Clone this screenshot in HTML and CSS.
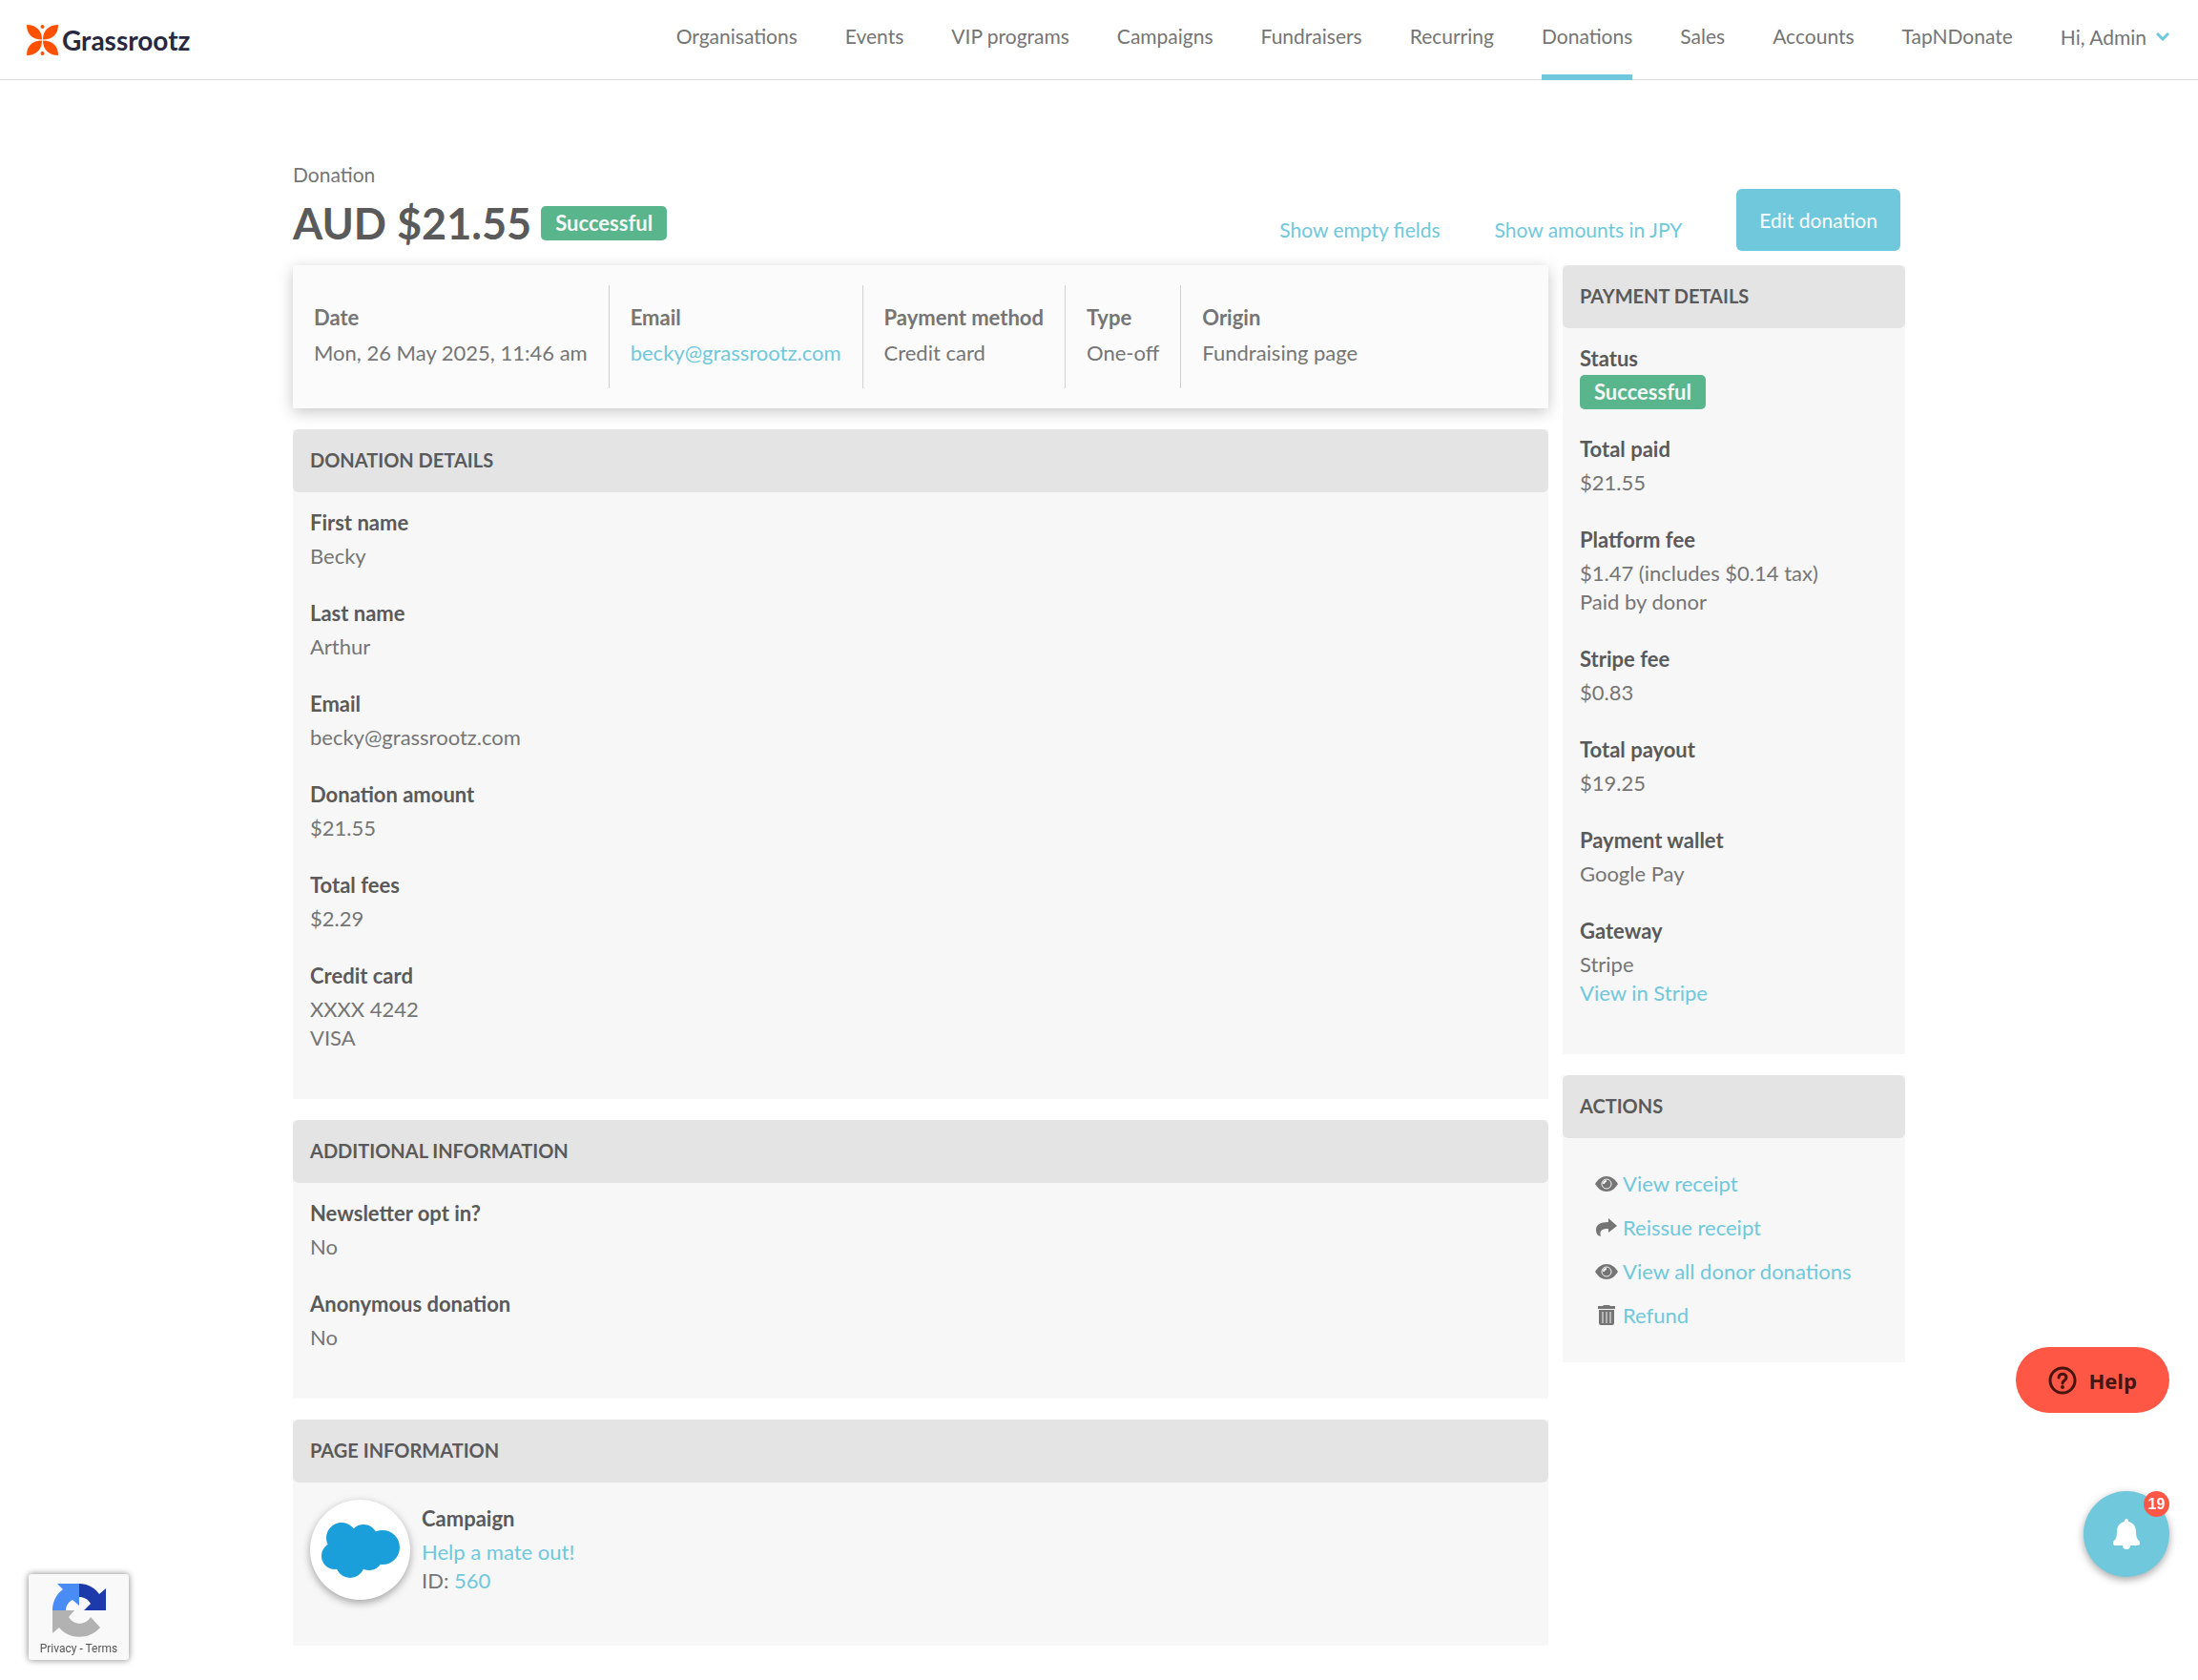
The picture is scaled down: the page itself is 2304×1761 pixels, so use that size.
FILE: index.html
```html
<!DOCTYPE html>
<html lang="en">
<head>
    <meta charset="UTF-8">
    <title>Donation - Grassrootz</title>
    <link rel="stylesheet" href="styles.css">
</head>
<body>
    <header class="topbar">
        <a class="logo" href="#">
            <svg width="33" height="32" viewBox="0 0 33 32" fill="#ff5100">
                <path d="M0 0C10 0 16 6 16 15.500C6 15.500 0 10 0 0Z"/>
                <path d="M33 0C23 0 17 6 17 15.500C27 15.500 33 10 33 0Z"/>
                <path d="M0 32C0 22 6 16.500 16 16.500C16 26 10 32 0 32Z"/>
                <path d="M33 32C33 22 27 16.500 17 16.500C17 26 23 32 33 32Z"/>
                <circle cx="16.500" cy="2" r="2"/>
                <circle cx="16.500" cy="30" r="2"/>
            </svg>
            <span>Grassrootz</span>
        </a>
        <nav class="nav">
            <a href="#">Organisations</a>
            <a href="#">Events</a>
            <a href="#">VIP programs</a>
            <a href="#">Campaigns</a>
            <a href="#">Fundraisers</a>
            <a href="#">Recurring</a>
            <a href="#" class="active">Donations</a>
            <a href="#">Sales</a>
            <a href="#">Accounts</a>
            <a href="#">TapNDonate</a>
            <button class="user" type="button">Hi, Admin
                <svg width="14" height="9" viewBox="0 0 14 9" fill="none" stroke="#70c8dc" stroke-width="3"><path d="M1 1l6 6 6-6"/></svg>
            </button>
        </nav>
    </header>

    <main class="container">
        <div class="title-row">
            <div class="title">
                <div class="crumb">Donation</div>
                <div class="amount">
                    <h1>AUD $21.55</h1>
                    <span class="badge">Successful</span>
                </div>
            </div>
            <div class="title-actions">
                <a href="#">Show empty fields</a>
                <a href="#">Show amounts in JPY</a>
                <button class="btn" type="button">Edit donation</button>
            </div>
        </div>

        <div class="columns">
            <div class="column">
                <dl class="summary">
                    <div><dt>Date</dt><dd>Mon, 26 May 2025, 11:46 am</dd></div>
                    <div><dt>Email</dt><dd><a href="#">becky@grassrootz.com</a></dd></div>
                    <div><dt>Payment method</dt><dd>Credit card</dd></div>
                    <div><dt>Type</dt><dd>One-off</dd></div>
                    <div><dt>Origin</dt><dd>Fundraising page</dd></div>
                </dl>

                <section class="card">
                    <h2>DONATION DETAILS</h2>
                    <dl class="fields">
                        <div><dt>First name</dt><dd>Becky</dd></div>
                        <div><dt>Last name</dt><dd>Arthur</dd></div>
                        <div><dt>Email</dt><dd>becky@grassrootz.com</dd></div>
                        <div><dt>Donation amount</dt><dd>$21.55</dd></div>
                        <div><dt>Total fees</dt><dd>$2.29</dd></div>
                        <div><dt>Credit card</dt><dd>XXXX 4242<br>VISA</dd></div>
                    </dl>
                </section>

                <section class="card">
                    <h2>ADDITIONAL INFORMATION</h2>
                    <dl class="fields">
                        <div><dt>Newsletter opt in?</dt><dd>No</dd></div>
                        <div><dt>Anonymous donation</dt><dd>No</dd></div>
                    </dl>
                </section>

                <section class="card">
                    <h2>PAGE INFORMATION</h2>
                    <div class="campaign">
                        <div class="avatar">
                            <svg width="82" height="58" viewBox="0 0 82 58" fill="#1a9fdb">
                                <circle cx="21" cy="16" r="16"/>
                                <circle cx="44" cy="17" r="15"/>
                                <circle cx="64" cy="26" r="18"/>
                                <circle cx="14" cy="35" r="14"/>
                                <circle cx="30" cy="43" r="15"/>
                                <circle cx="50" cy="36" r="14"/>
                                <path d="M14 22h50v18H14z"/>
                            </svg>
                        </div>
                        <dl>
                            <dt>Campaign</dt>
                            <dd><a href="#">Help a mate out!</a><br>ID: <a href="#">560</a></dd>
                        </dl>
                    </div>
                </section>
            </div>

            <aside class="column">
                <section class="card">
                    <h2>PAYMENT DETAILS</h2>
                    <dl class="fields">
                        <div class="status"><dt>Status</dt><dd><span class="badge">Successful</span></dd></div>
                        <div><dt>Total paid</dt><dd>$21.55</dd></div>
                        <div><dt>Platform fee</dt><dd>$1.47 (includes $0.14 tax)<br>Paid by donor</dd></div>
                        <div><dt>Stripe fee</dt><dd>$0.83</dd></div>
                        <div><dt>Total payout</dt><dd>$19.25</dd></div>
                        <div><dt>Payment wallet</dt><dd>Google Pay</dd></div>
                        <div><dt>Gateway</dt><dd>Stripe<br><a href="#">View in Stripe</a></dd></div>
                    </dl>
                </section>

                <section class="card">
                    <h2>ACTIONS</h2>
                    <ul class="actions">
                        <li>
                            <svg width="24" height="24" viewBox="0 0 24 24"><path d="M0 12C3 7 7 4 12 4s9 3 12 8c-3 5-7 8-12 8S3 17 0 12z"/><circle cx="12" cy="12" r="5" fill="none" stroke="#f7f7f7" stroke-width="1"/><path d="M9 12a3 3 0 0 1 3-3" fill="none" stroke="#f7f7f7" stroke-width="2"/></svg>
                            <a href="#">View receipt</a>
                        </li>
                        <li>
                            <svg width="24" height="24" viewBox="0 0 24 24"><path d="M14 2l9 8-9 7v-4C8 13 4 14 6 21C2 20 1 17 1 14C1 9 5 6 14 6z"/></svg>
                            <a href="#">Reissue receipt</a>
                        </li>
                        <li>
                            <svg width="24" height="24" viewBox="0 0 24 24"><path d="M0 12C3 7 7 4 12 4s9 3 12 8c-3 5-7 8-12 8S3 17 0 12z"/><circle cx="12" cy="12" r="5" fill="none" stroke="#f7f7f7" stroke-width="1"/><path d="M9 12a3 3 0 0 1 3-3" fill="none" stroke="#f7f7f7" stroke-width="2"/></svg>
                            <a href="#">View all donor donations</a>
                        </li>
                        <li>
                            <svg width="24" height="24" viewBox="0 0 24 24"><path d="M3 2h5l1-1h6l1 1h5v3H3zM4 6h16v14q0 2-2 2H6q-2 0-2-2z"/><path d="M8 8v12M12 8v12M16 8v12" stroke="#f7f7f7" stroke-width="1"/></svg>
                            <a href="#">Refund</a>
                        </li>
                    </ul>
                </section>
            </aside>
        </div>
    </main>

    <div class="recaptcha">
        <svg width="56" height="56" viewBox="0 0 56 56">
            <path fill="#1c3aa9" d="M28 0c9 0 16 4 21 11l7-6v23H33l7-7c-3-5-7-7-12-7z"/>
            <path fill="#4a8cf5" d="M28 0v23l-7-6c-4 2-7 6-7 11H0C0 19 4 11 11 6L5 0z"/>
            <path fill="#b2b2b2" d="M0 28h23l-6 7c5 9 18 9 23 0l10 11c-11 13-33 13-43 0l-7 6z"/>
        </svg>
        <div><a href="#">Privacy</a> - <a href="#">Terms</a></div>
    </div>

    <button class="help" type="button">
        <svg width="30" height="30" viewBox="0 0 30 30" fill="none" stroke="#47150f" stroke-width="3"><circle cx="15" cy="15" r="13"/><path d="M11 12c0-5 8-5 8 0 0 3-4 3-4 6" stroke-linecap="round"/><circle cx="15" cy="22" r="2" fill="#47150f" stroke="none"/></svg>
        Help
    </button>

    <button class="bell" type="button" aria-label="Notifications">
        <svg width="28" height="32" viewBox="0 0 28 32" fill="#fff"><path d="M14 0q2 0 2 3c5 1 8 5 8 10 0 6 1 8 3 10 2 2 1 5-1 5h-8a4 4 0 0 1-8 0H2c-2 0-3-3-1-5 2-2 3-4 3-10 0-5 3-9 8-10q0-3 2-3z"/></svg>
        <span class="count">19</span>
    </button>
</body>
</html>
```

FILE: styles.css
```css
* { box-sizing: border-box; }
body { margin: 0; background: #fff; color: #757575; font-family: Lato, "Liberation Sans", sans-serif; font-size: 22px; line-height: 28px; }
h1, h2, dl, dd, ul { margin: 0; padding: 0; }
a { color: #70c8dc; text-decoration: none; }
button { border: 0; font-family: inherit; cursor: pointer; }
svg { display: block; flex: none; }
dt { font-weight: bold; }
dt, dd { line-height: 30px; }

.topbar { display: flex; justify-content: space-between; height: 84px; padding: 0 30px 0 28px; border-bottom: 1px solid #dcdcdc; }
.logo { display: flex; align-items: center; gap: 4px; color: #2a2840; font-size: 28px; font-weight: bold; }
.nav { display: flex; gap: 50px; font-size: 21px; }
.nav a { height: 84px; padding-top: 24px; color: #757575; white-space: nowrap; }
.nav a.active { border-bottom: 6px solid #70c8dc; }
.user { display: flex; align-items: center; gap: 10px; height: 77px; padding: 0; background: none; color: #757575; font-size: 21px; white-space: nowrap; }

.container { max-width: 1690px; margin: 0 auto; padding: 84px 0 24px; }
.title-row { display: flex; justify-content: space-between; align-items: flex-end; height: 110px; }
.title { padding-bottom: 23px; }
.crumb { font-size: 21px; }
.amount { display: flex; align-items: center; gap: 10px; margin-top: 16px; }
h1 { color: #5a5a5a; font-size: 45px; line-height: 42px; }
.badge { display: inline-block; height: 36px; padding: 0 15px; border-radius: 5px; background: #58b58c; color: #f7f7f7; font-weight: bold; line-height: 36px; }
.title-actions { display: flex; align-items: flex-end; gap: 57px; padding: 0 5px 15px 0; font-size: 21px; }
.title-actions a { padding-bottom: 8px; }
.btn { height: 65px; padding: 0 24px; border-radius: 6px; background: #70c8dc; color: #fff; font-size: 21px; }

.columns { display: grid; grid-template-columns: minmax(0, 1fr) 359px; gap: 15px; align-items: start; }
.column { display: grid; gap: 22px; }

.summary { display: flex; padding: 21px 0; background: #fbfbfb; box-shadow: 0 4px 15px rgba(0, 0, 0, 0.22); }
.summary div { height: 108px; padding: 19px 22px 0; border-left: 1px solid #d0d0d0; }
.summary div:first-child { border-left: 0; }
.summary dd { margin-top: 7px; }

.card { background: #f7f7f7; }
h2 { height: 66px; padding: 0 18px; border-radius: 6px; background: #e4e4e4; color: #5a5a5a; font-size: 20px; line-height: 64px; }
.fields { padding: 17px 18px 19px; }
.card dt { color: #5a5a5a; }
.card dd { margin-top: 5px; }
.fields div { margin-bottom: 30px; }
.card .status dd { height: 36px; margin-top: 2px; }
.fields .status { margin-bottom: 27px; }

.campaign { display: flex; align-items: center; gap: 12px; padding: 18px 18px 48px; }
.avatar { display: flex; align-items: center; justify-content: center; width: 105px; height: 105px; border-radius: 50%; background: #fff; box-shadow: 0 3px 8px rgba(0, 0, 0, 0.35); }

.actions { padding: 25px 34px 26px; list-style: none; }
.actions li { display: flex; align-items: center; gap: 5px; height: 46px; }
.actions svg { fill: #757575; }

.recaptcha { position: fixed; left: 30px; bottom: 21px; display: flex; flex-direction: column; align-items: center; gap: 4px; width: 105px; height: 90px; padding-top: 10px; border-radius: 3px; background: #f9f9f9; box-shadow: 0 0 7px #808080; color: #333; font-family: Roboto, sans-serif; font-size: 12px; line-height: 16px; }
.recaptcha a { color: #555; }
.help { position: fixed; right: 30px; bottom: 280px; display: flex; align-items: center; gap: 13px; height: 69px; padding: 0 34px; border-radius: 35px; background: #ff5745; color: #47150f; font-family: "Open Sans", sans-serif; font-size: 22px; font-weight: bold; }
.bell { position: fixed; right: 30px; bottom: 108px; display: flex; align-items: center; justify-content: center; width: 90px; height: 90px; border-radius: 50%; background: #70c8dc; box-shadow: 0 3px 9px rgba(0, 0, 0, 0.35); }
.count { position: absolute; top: 0; right: 0; width: 27px; height: 27px; border-radius: 50%; background: #ff5745; color: #fff; font-family: "Liberation Sans", sans-serif; font-size: 16px; font-weight: bold; line-height: 27px; }
```
